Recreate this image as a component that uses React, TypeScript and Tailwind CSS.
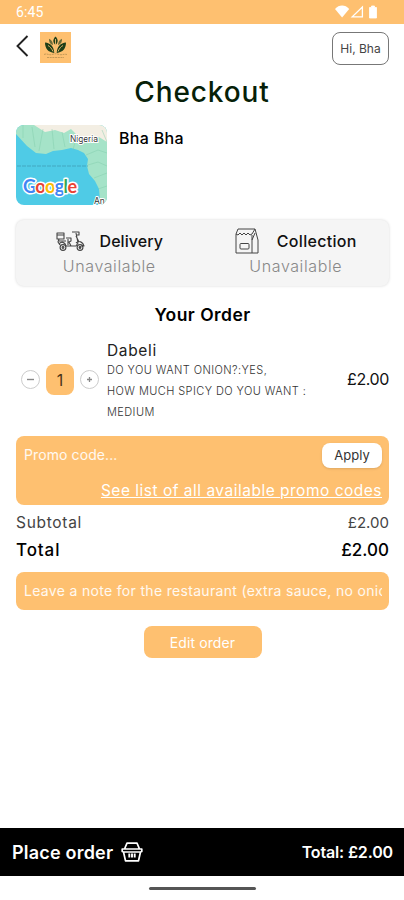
import React, { useState } from 'react';

const BackIcon = () => (
  <svg width="13" height="22" viewBox="0 0 13 22" fill="none" stroke="#222" strokeWidth="1.9">
    <path d="M11.5 1 1.5 11l10 10" />
  </svg>
);

const StatusIcons = () => (
  <svg width="44" height="14" viewBox="0 0 44 14" fill="#fff">
    <path d="M0 4C4-.6 10.200-.6 14.200 4L7.100 12.600Z" />
    <path d="M27.400 2v9.800H17.200Z" fill="none" stroke="#fff" strokeWidth="1.300" />
    <path d="M36.500 1h3v1.500h2V13h-7V2.500h2Z" stroke="#fff" strokeWidth=".8" strokeLinejoin="round" />
  </svg>
);

const LotusLogo = () => (
  <svg width="31" height="31" viewBox="0 0 31 31" className="bg-[#fec070]">
    <g fill="#203f18">
      <path d="M15.500 4.500c2.800 3 3 5.700 0 8.500-3-2.800-2.800-5.500 0-8.500Z" />
      <path d="M9 6.800c3.200 1.500 4.200 4 3.800 6.500C10 12 8.700 9.800 9 6.800ZM22 6.800c-3.200 1.500-4.200 4-3.800 6.500C21 12 22.300 9.800 22 6.800Z" opacity=".65" />
      <path d="M5 10.500c5.500.5 9 4 9.300 10.500C8 20.200 5 16.500 5 10.500ZM26 10.500c-5.500.5-9 4-9.300 10.500C23 20.200 26 16.500 26 10.500Z" />
    </g>
    <path d="M8 13.500c2 1 3.700 3 5 6M23 13.500c-2 1-3.700 3-5 6M15.500 7v13" stroke="#f1bd70" strokeWidth=".9" fill="none" />
    <path d="M4 22.500c3-1.500 5 1 8 0s4-1 7 0 5-1 8 0M7 25.500h17" stroke="#8a713d" strokeWidth="1" strokeDasharray="2 .7" fill="none" opacity=".5" />
  </svg>
);

const MapThumb = () => (
  <svg width="91" height="80" viewBox="0 0 91 80" className="rounded-lg">
    <rect width="91" height="80" fill="#4fcbe6" />
    <path d="M0 0h91v80h-5l-2-5-1-11-4-8-6-7-2-8 1-7-4-6-6-3-7-2-9 2-9 1-7 3-10-1-9-7L0 9Z" fill="#a5e3c8" />
    <path d="M18 0h73v17l-8-5-11 3-9-3-8-8-7 4-9-3-10 2Z" fill="#f3eee3" />
    <path d="M7 0v13M16 2l3 20M27 4l-4 22M36 4l2 20M46 7l3 15M60 13l-3 12M70 30l12-5 9 3M72 40l10-3 9 4M78 53l13-5M82 64l9-3M86 5l5 12" fill="none" stroke="#7cc9a9" strokeWidth=".6" opacity=".7" />
    <path d="M1 41h71" stroke="#3f9fb6" strokeWidth=".8" strokeDasharray="4 1" />
    <text x="54" y="17" fontFamily="Inter, sans-serif" fontSize="8.500" textLength="28" fill="#333" stroke="#fff" strokeWidth="2" paintOrder="stroke">Nigeria</text>
    <text x="78" y="79" fontFamily="Inter, sans-serif" fontSize="8.500" fill="#333" stroke="#fff" strokeWidth="2" paintOrder="stroke">An</text>
    <text x="7" y="68" fontFamily="Lato, sans-serif" fontWeight="700" fontSize="18" textLength="54" stroke="#fff" strokeWidth="3" strokeLinejoin="round" paintOrder="stroke">
      <tspan fill="#4285f4">G</tspan><tspan fill="#ea4335">o</tspan><tspan fill="#fbbc05">o</tspan><tspan fill="#4285f4">g</tspan><tspan fill="#34a853">l</tspan><tspan fill="#ea4335">e</tspan>
    </text>
  </svg>
);

const ScooterIcon = () => (
  <svg width="29" height="20" viewBox="0 0 29 20" fill="none" stroke="#444" strokeWidth="1.100" strokeLinejoin="round">
    <path d="M1 2h7v6H1ZM1 4h7M3 8l-1 3 2 3M10 7h5v3l-2 1 2 4h5l2-3-2-10M12 8v6M16 1h7v3h-3M20 5l3 6M20 12c3-3 7-1 8 3h-3M3 13c2-3 6-2 7 2h5M3 10h7" />
    <circle cx="7" cy="16.500" r="2.900" />
    <circle cx="24" cy="16.500" r="2.900" />
    <circle cx="7" cy="16.500" r=".9" />
    <circle cx="24" cy="16.500" r=".9" fill="#333" />
  </svg>
);

const BagIcon = () => (
  <svg width="24" height="26" viewBox="0 0 24 26" fill="none" stroke="#444" strokeWidth="1" strokeLinejoin="round">
    <path d="M1 6v19h22V12l-3-11H3L1 6l2 1 2-2 2 2 2-2 2 2 2-2 2 2 2-1 3-5M17 7v18M17 12l3-7" />
    <rect x="5" y="15.500" width="9" height="5.500" rx="1" />
  </svg>
);

const BasketIcon = () => (
  <svg width="22" height="20" viewBox="0 0 22 20" fill="none" stroke="#fff" strokeWidth="1.700" strokeLinejoin="round">
    <path d="M3.500 7 6 1.200h10L18.500 7M1.200 7h19.600v2.500l-1.300.5h-17l-1.300-.5ZM2.500 10l2 8.800h13l2-8.800" />
    <path d="M8.300 11.500v4M11 11.500v4M13.700 11.500v4" strokeWidth="1.900" />
  </svg>
);

interface OptionProps {
  icon: React.ReactNode;
  label: string;
  className: string;
}

const FulfilmentOption: React.FC<OptionProps> = ({ icon, label, className }) => (
  <button type="button" className="flex-1 flex flex-col items-center">
    <span className={`flex items-center h-[26px] text-[16px] font-medium text-[#111] ${className}`}>
      {icon}
      {label}
    </span>
    <span className="text-[16px] leading-6 font-light tracking-[0.6px] text-[#888]">Unavailable</span>
  </button>
);

const App: React.FC = () => {
  const [quantity, setQuantity] = useState(1);
  const total = `£${(quantity * 2).toFixed(2)}`;

  return (
    <div className="w-[404px] h-[900px] flex flex-col bg-white text-black overflow-hidden font-['Inter',sans-serif]">
      <div className="h-6 shrink-0 bg-[#fec070] flex items-center justify-between pl-4 pr-[25px] text-white">
        <span className="font-[Roboto,sans-serif] text-[14px] leading-6 tracking-[0.1px]">6:45</span>
        <StatusIcons />
      </div>

      <div className="h-[46px] shrink-0 flex items-start justify-between pl-4 pr-[15px] pt-2">
        <div className="flex items-start gap-[11px]">
          <button type="button" aria-label="Back" className="mt-[3px]"><BackIcon /></button>
          <LotusLogo />
        </div>
        <button type="button" className="w-[57px] h-[33px] border border-[#777] rounded-lg text-[12px] text-[#444]">Hi, Bha</button>
      </div>

      <h1 className="h-[55px] shrink-0 pt-[4px] text-center text-[28px] leading-9 font-medium tracking-[0.9px] text-[#071f08]">Checkout</h1>

      <main className="flex-1 pl-4 pr-[15px]">
        <div className="flex gap-3">
          <MapThumb />
          <span className="text-[16px] leading-[26px] font-medium tracking-[0.3px]">Bha Bha</span>
        </div>

        <div className="mt-[15px] h-[66px] flex pt-2 bg-[#f5f5f5] rounded-lg shadow-[0_0_3px_rgba(0,0,0,0.16)]">
          <FulfilmentOption icon={<ScooterIcon />} label="Delivery" className="gap-[15px] tracking-[0.05px]" />
          <FulfilmentOption icon={<BagIcon />} label="Collection" className="gap-[18px] tracking-[0.3px]" />
        </div>

        <h2 className="mt-[15px] text-center text-[17.5px] leading-7 font-semibold tracking-[0.45px]">Your Order</h2>

        <div className="mt-[12px] h-[82px] flex items-start">
          <div className="w-[91px] pt-[23px] pl-[5px] flex items-center gap-[6px]">
            <button type="button" onClick={() => setQuantity(Math.max(1, quantity - 1))} className="size-[19px] rounded-full border border-[#ccc] flex items-center justify-center">
              <svg width="9" height="9" viewBox="0 0 9 9"><path d="M1 4.500h7" stroke="#888" strokeWidth="1.400" /></svg>
            </button>
            <span className="w-[28px] h-[31px] rounded-lg bg-[#fec070] flex items-center justify-center text-[16px] text-[#4a3517]">{quantity}</span>
            <button type="button" onClick={() => setQuantity(quantity + 1)} className="size-[19px] rounded-full border border-[#ccc] flex items-center justify-center">
              <svg width="9" height="9" viewBox="0 0 9 9"><path d="M2 4.500h5M4.500 2v5" stroke="#888" strokeWidth="1.300" /></svg>
            </button>
          </div>
          <div className="flex-1">
            <div className="text-[15.5px] leading-[19px] tracking-[0.65px] text-[#222]">Dabeli</div>
            <div className="text-[11px] leading-[21px] tracking-[0.42px] font-light text-[#333] whitespace-nowrap">
              DO YOU WANT ONION?:YES,<br />HOW MUCH SPICY DO YOU WANT :<br />MEDIUM
            </div>
          </div>
          <span className="pt-6 text-[16px] leading-7 tracking-[-0.4px] text-[#111]">{total}</span>
        </div>

        <div className="mt-[13px] h-[69px] pl-2 pr-[7px] pt-[7px] bg-[#fec070] rounded-lg text-white">
          <div className="flex items-start justify-between">
            <input placeholder="Promo code..." className="w-60 h-[22px] text-[14px] tracking-[0.1px] outline-none placeholder:text-white/90" />
            <button type="button" className="w-[60px] h-[25px] bg-white rounded-lg shadow-sm text-[13px] text-[#333]">Apply</button>
          </div>
          <div className="mt-[11px] text-right text-[15.5px] leading-6 tracking-[0.5px] underline whitespace-nowrap">See list of all available promo codes</div>
        </div>

        <div className="mt-1 flex justify-between text-[15px] leading-7 text-[#444]"><span className="text-[15.5px] tracking-[0.7px]">Subtotal</span><span>{total}</span></div>
        <div className="flex justify-between text-[17px] leading-[26px] font-medium"><span className="tracking-[0.9px]">Total</span><span>{total}</span></div>

        <div className="mt-[9px] h-[38px] pl-2 pr-[7px] bg-[#fec070] rounded-lg">
          <input placeholder="Leave a note for the restaurant (extra sauce, no onion, etc.)" className="block w-full h-[36px] text-[14px] tracking-[0.32px] outline-none placeholder:text-white/90" />
        </div>
        <button type="button" className="block mx-auto mt-4 w-[118px] h-8 bg-[#fec070] rounded-lg text-[14px] tracking-[0.1px] text-white">Edit order</button>
      </main>

      <div className="h-12 shrink-0 bg-black text-white flex items-center justify-between pl-3 pr-[11px] font-semibold">
        <button type="button" className="flex items-center gap-2 text-[18px] tracking-[0.2px]"><span>Place order</span><BasketIcon /></button>
        <span className="text-[16px] tracking-[-0.15px]">Total: {total}</span>
      </div>
      <div className="h-6 shrink-0 flex items-center justify-center"><div className="w-[107px] h-[3px] rounded-full bg-[#555]" /></div>
    </div>
  );
};

export default App;
